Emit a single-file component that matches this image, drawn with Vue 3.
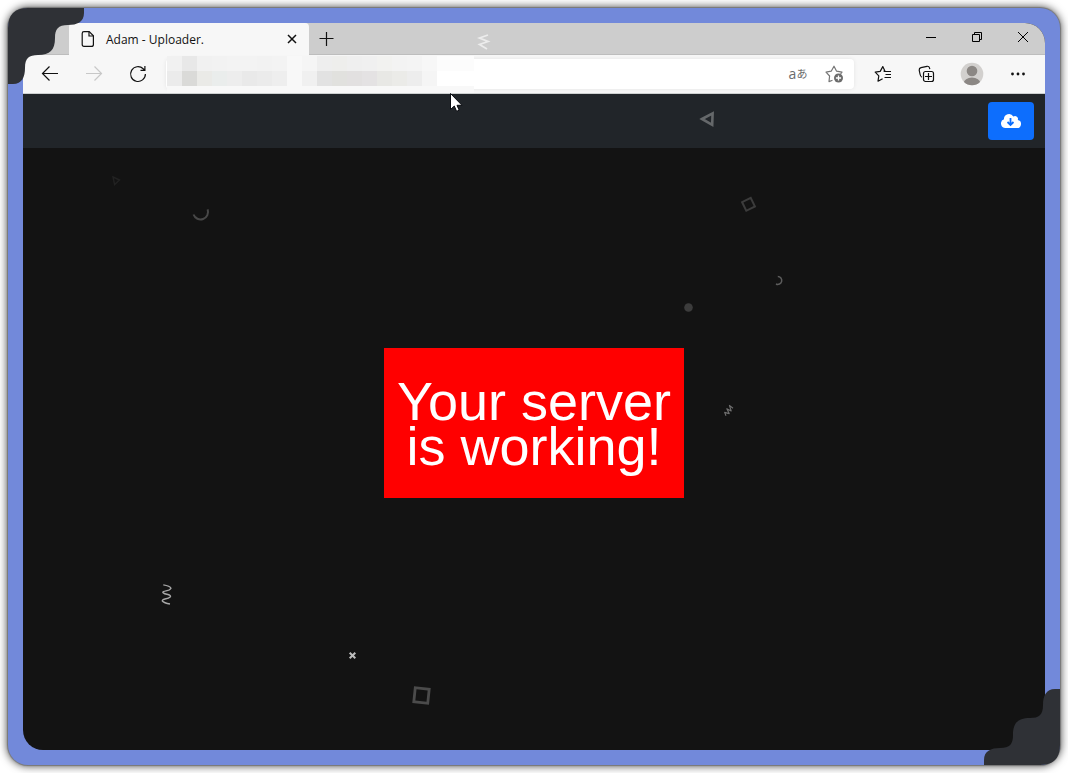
<script setup>
const topRow = ['#f1f1f1', '#e8e8e8', '#f1f1f1', '#f2f2f2', '#f3f3f3', '#f3f3f3', '#f2f2f2', '#f3f3f3', '#f8f8f8', '#f5f5f5', '#eeeeee', '#eeeeec', '#efefef', '#f0f0f0', '#f2f2f0', '#f3f3f3', '#f4f4f4', '#f7f7f7']
const bottomRow = ['#ebebeb', '#dadad8', '#eaeae7', '#eaedec', '#ededed', '#e9e9e9', '#ebebeb', '#eeeeee', '#f8f8f8', '#f0f0f0', '#e2e2e2', '#e1e1de', '#e2e0e0', '#e4e2e3', '#e8e8e5', '#ebebe8', '#ededed', '#f5f5f5']
</script>

<template>
  <div class="desktop">
    <div class="frame">
      <div class="window">
        <div class="tabstrip">
          <div class="tab">
            <svg class="doc" width="14" height="18" viewBox="0 0 14 18" fill="none" stroke="#111" stroke-width="1.2">
              <path d="M3 1.6H8.2L12.4 5.8V14.4Q12.4 16.4 10.4 16.4H3Q1.2 16.4 1.2 14.4V3.4Q1.2 1.6 3 1.6Z" />
              <path d="M8 1.8V6H12.2" />
            </svg>
            <span class="title">Adam - Uploader.</span>
            <button class="plain close" aria-label="Close tab">
              <svg width="10" height="10" viewBox="0 0 10 10" stroke="#111" stroke-width="1.5"><path d="M1 1L9 9M9 1L1 9" /></svg>
            </button>
          </div>
          <button class="plain add" aria-label="New tab">
            <svg width="16" height="16" viewBox="0 0 16 16" stroke="#111" stroke-width="1.2"><path d="M8.5 1V15M1.5 7.5H15.5" /></svg>
          </button>
          <div class="controls">
            <button class="plain" aria-label="Minimize">
              <svg width="14" height="12" viewBox="0 0 14 12" stroke="#000"><path d="M3 6.5H13" /></svg>
            </button>
            <button class="plain" aria-label="Restore">
              <svg width="14" height="12" viewBox="0 0 14 12" fill="none" stroke="#000"><path d="M3.5 3.5H10.5V10.5H3.5ZM5.5 3.5V1.5H12.5V8.5H10.5" /></svg>
            </button>
            <button class="plain" aria-label="Close">
              <svg width="14" height="12" viewBox="0 0 14 12" stroke="#000"><path d="M3 1L13 11M13 1L3 11" /></svg>
            </button>
          </div>
        </div>

        <div class="toolbar">
          <button class="plain tool" aria-label="Back">
            <svg width="18" height="18" viewBox="0 0 18 18" fill="none" stroke="#111" stroke-width="1.2"><path d="M17 8.5H1.6M8.5 1.5L1.5 8.5L8.5 15.5" /></svg>
          </button>
          <button class="plain tool" aria-label="Forward">
            <svg width="18" height="18" viewBox="0 0 18 18" fill="none" stroke="#c8c8c8" stroke-width="1.2"><path d="M1 8.5H16.4M9.5 1.5L16.5 8.5L9.5 15.5" /></svg>
          </button>
          <button class="plain tool" aria-label="Refresh">
            <svg width="18" height="18" viewBox="0 0 18 18" fill="none" stroke="#111" stroke-width="1.2"><path d="M16.4 9A7.4 7.4 0 1 1 14.2 3.8L15.8 5.3M15.9 1V5.4H11.5" /></svg>
          </button>
          <div class="address">
            <input type="text" aria-label="Address" />
            <div class="mosaic" aria-hidden="true">
              <i v-for="(c, i) in topRow" :key="'t' + i" :style="{ background: c }"></i>
              <i class="tail soft"></i>
              <i v-for="(c, i) in bottomRow" :key="'b' + i" :style="{ background: c }"></i>
              <i class="tail"></i>
            </div>
            <button class="plain lang" aria-label="Translate"><span>a</span><span class="kana">あ</span></button>
            <button class="plain star" aria-label="Add to favorites">
              <svg width="19" height="18" viewBox="0 0 19 18" fill="none" stroke="#767676" stroke-width="1.2">
                <path d="M7.5 15.2L4 16.6L4.6 11L1 7.2L6.2 6.2L9 1.2L11.6 6.2L17 7.2L15.6 8.8" stroke-linejoin="round" />
                <circle cx="13.5" cy="13" r="4.5" fill="#6b6b6b" stroke="none" />
                <path d="M13.5 10.4V15.6M10.9 13H16.1" stroke="#fff" stroke-width="1.3" />
              </svg>
            </button>
          </div>
          <div class="actions">
            <button class="plain tool" aria-label="Favorites">
              <svg width="18" height="18" viewBox="0 0 18 18" fill="none" stroke="#111" stroke-width="1.2">
                <path d="M9.5 6.2H11L8.8 1.6L6.2 6.4L1.2 7.2L4.8 10.8L4 16.2L8.6 13.8" stroke-linejoin="round" />
                <path d="M10 6.5H17M11.5 9.5H17M10.5 12.5H17" />
              </svg>
            </button>
            <button class="plain tool" aria-label="Collections">
              <svg width="18" height="18" viewBox="0 0 18 18" fill="none" stroke="#111" stroke-width="1.2">
                <path d="M4 12.2C2.4 11.6 2.3 10.6 2 9L1.2 5.2Q1 3.2 3 2.7L9 1.3Q11 1 11.5 2.8L11.8 4.2" />
                <rect x="5.5" y="6.5" width="10" height="10" rx="2" />
                <path d="M10.5 8V15M7 11.5H14" />
              </svg>
            </button>
            <button class="plain tool wide" aria-label="Profile">
              <svg width="24" height="24" viewBox="0 0 24 24">
                <defs><clipPath id="face"><circle cx="12" cy="12" r="11.3" /></clipPath></defs>
                <circle cx="12" cy="12" r="11.3" fill="#d2d0ce" />
                <g clip-path="url(#face)" fill="#8b8784"><circle cx="12" cy="9" r="5.3" /><ellipse cx="12" cy="21" rx="8.3" ry="5.4" /></g>
              </svg>
            </button>
            <button class="plain tool wide" aria-label="Settings and more">
              <svg width="16" height="4" viewBox="0 0 16 4" fill="#111"><circle cx="2.5" cy="2" r="1.4" /><circle cx="8" cy="2" r="1.4" /><circle cx="13.5" cy="2" r="1.4" /></svg>
            </button>
          </div>
        </div>

        <header class="navbar">
          <button class="download" aria-label="Download">
            <svg width="20" height="16" viewBox="0 0 20 16">
              <path d="M4.5 15A4.5 4.500 0 0 1 3 6.260A5 5 0 0 1 12.330 3.500A3 3 0 0 1 16.800 7.080A4 4 0 0 1 16 15Z" fill="#fff" />
              <path d="M9.500 5V11.500M6.500 9L9.500 12L12.500 9" fill="none" stroke="#0d6efd" stroke-width="1.800" />
            </svg>
          </button>
        </header>
        <main class="page">
          <h1 class="notice">Your server is working!</h1>
        </main>
      </div>

      <svg class="corner top-left" width="76" height="76" viewBox="0 0 76 76" fill="#2f3136">
        <path d="M0 76H5C14 76 17 69 17 60C17 50 21 47 30 47C42 47 47 42 47 30C47 21 50 17 60 17C69 17 76 14 76 5V0H20Q0 0 0 20Z" />
      </svg>
      <svg class="corner bottom-right" width="76" height="76" viewBox="0 0 76 76" fill="#2f3136">
        <path d="M0 76H5C14 76 17 69 17 60C17 50 21 47 30 47C42 47 47 42 47 30C47 21 50 17 60 17C69 17 76 14 76 5V0H20Q0 0 0 20Z" />
      </svg>
    </div>

    <svg class="confetti" fill="none" aria-hidden="true">
      <path d="M488 35L479.5 38L488 41.5L479.5 44.5L487 49" stroke="#ececec" stroke-width="1.8" />
      <path d="M702 119L712.6 113.4L712.2 124.8Z" stroke="#65686a" stroke-width="2.6" />
      <path d="M113 177L119.5 180L114.6 184.6Z" stroke="#222" stroke-width="1.4" />
      <path d="M193.5 214.5A7.5 7.5 0 0 0 207.6 209.3" stroke="#484848" stroke-width="2" />
      <rect x="743.7" y="199.5" width="9.6" height="9.6" transform="rotate(-26 748.5 204.3)" stroke="#3c3c3c" stroke-width="2" />
      <path d="M777.8 276.4A4 4 0 1 1 776 284" stroke="#5c5c5c" stroke-width="1.5" />
      <circle cx="688.5" cy="307.5" r="4.3" fill="#3c3c3c" />
      <path d="M726 415.8L724.6 412.4L729.2 413.6L726.8 408.8L731.2 411L729.4 405.4L733 408.2" stroke="#707070" stroke-width="1.1" stroke-linejoin="round" />
      <path d="M163.3 584.8Q170 585.8 171 588.2Q170 590.2 166 590.8Q162.5 591.5 162.8 592.5Q164 594 168 594.5Q171 595.3 170.5 596.7Q169 598.2 165 599Q162 599.8 162.3 601Q164 603 170 604" stroke="#a8a8a8" stroke-width="1.3" />
      <path d="M349.7 652.7L355.3 658.3M355.3 652.7L349.7 658.3" stroke="#bdbdbd" stroke-width="2" />
      <rect x="414.5" y="688.5" width="14" height="14" transform="rotate(6 421.5 695.5)" stroke="#4b4b4b" stroke-width="2.8" />
      <path d="M450.5 93.5V109.5L454.3 106L456.6 111.3L459.2 110.2L457 105.3H462Z" fill="#fff" stroke="#0b0d12" stroke-width="1" />
    </svg>
  </div>
</template>

<style scoped>
.desktop {
  position: relative;
  display: flex;
  min-height: 100vh;
  box-sizing: border-box;
  padding: 8px;
  background: #fff;
  font-family: "Open Sans", "Noto Sans", "Noto Sans CJK JP", sans-serif;
}
.frame {
  position: relative;
  flex: 1;
  display: flex;
  padding: 15px;
  border-radius: 20px;
  background: #7289da;
  box-shadow: 0 0 1px 1px #777, 0 0 8px 1px rgba(0, 0, 0, 0.7);
}
.window {
  flex: 1;
  min-width: 0;
  display: flex;
  flex-direction: column;
  overflow: hidden;
  border-radius: 20px;
  background: #131313;
}
.plain {
  display: flex;
  align-items: center;
  justify-content: center;
  padding: 0;
  border: 0;
  background: none;
  font-family: inherit;
}
.tabstrip {
  display: flex;
  height: 32px;
  padding-left: 46px;
  background: #cdcdcd;
  box-shadow: inset 0 -1px #bdbdbd;
}
.tab {
  display: flex;
  align-items: center;
  width: 240px;
  box-sizing: border-box;
  padding: 0 11px 0 12px;
  border-radius: 4px 4px 0 0;
  background: #f7f7f7;
}
.title {
  flex: 1;
  padding-left: 11px;
  font-size: 12px;
  color: #111;
  white-space: nowrap;
}
.close {
  width: 12px;
  height: 20px;
}
.add {
  width: 34px;
}
.controls {
  display: flex;
  margin-left: auto;
  height: 28px;
}
.controls .plain {
  width: 46px;
}
.toolbar {
  display: flex;
  align-items: center;
  height: 39px;
  box-sizing: border-box;
  padding: 0 4px 0 5px;
  border-bottom: 1px solid #cdd0d0;
  background: #f7f7f7;
}
.tool {
  width: 44px;
  height: 30px;
}
.tool.wide {
  width: 46px;
}
.address {
  position: relative;
  flex: 1;
  min-width: 0;
  display: flex;
  align-items: center;
  height: 30px;
  margin: 0 7px 0 6px;
  padding-right: 2px;
  box-sizing: border-box;
  border-radius: 4px;
  background: #fff;
  box-shadow: 0 0 4px rgba(0, 0, 0, 0.08);
}
.address input {
  flex: 1;
  min-width: 0;
  height: 28px;
  border: 0;
  outline: 0;
  background: transparent;
}
.mosaic {
  position: absolute;
  left: 1px;
  top: -3px;
  display: grid;
  grid-template-columns: repeat(18, 15px) 37px;
  grid-auto-rows: 15px;
  padding-bottom: 7px;
  background: #f8f8f8;
}
.tail {
  background: #fff;
}
.tail.soft {
  background: #fcfcfc;
}
.lang {
  width: 36px;
  color: #6b6b6b;
  font-size: 14px;
  line-height: 20px;
}
.kana {
  font-size: 11px;
}
.star {
  width: 36px;
}
.actions {
  display: flex;
}
.navbar {
  display: flex;
  justify-content: flex-end;
  padding: 8px 11px;
  background: #212529;
}
.download {
  display: flex;
  align-items: center;
  justify-content: center;
  width: 46px;
  height: 38px;
  padding: 0;
  border: 0;
  border-radius: 4px;
  background: #0d6efd;
}
.page {
  flex: 1;
  display: flex;
  align-items: center;
  justify-content: center;
  padding-bottom: 52px;
}
.notice {
  display: flex;
  align-items: center;
  width: 300px;
  height: 150px;
  box-sizing: border-box;
  margin: 0;
  padding-top: 2px;
  background: #f00;
  color: #fff;
  font: 400 54px/45px "Liberation Sans", Arial, sans-serif;
  text-align: center;
}
.corner {
  position: absolute;
}
.top-left {
  left: 0;
  top: 0;
}
.bottom-right {
  right: 0;
  bottom: 0;
  transform: rotate(180deg);
}
.confetti {
  position: absolute;
  inset: 0;
  width: 100%;
  height: 100%;
  pointer-events: none;
}
</style>

<style>
body {
  margin: 0;
}
</style>
